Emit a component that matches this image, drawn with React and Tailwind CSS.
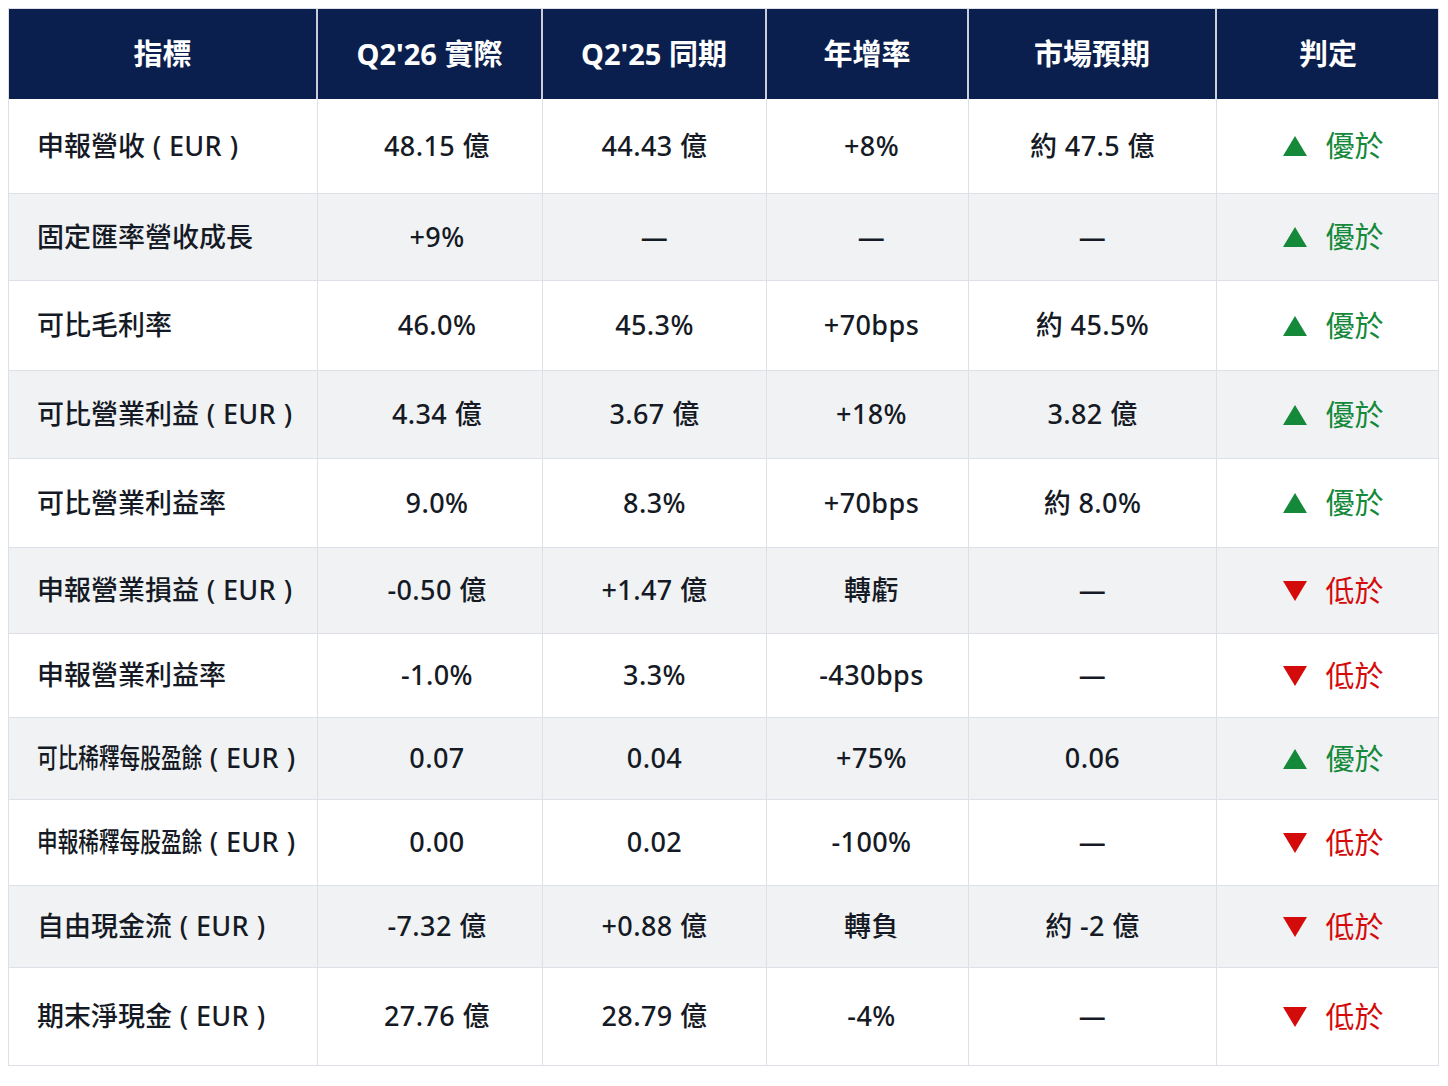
import React from "react";

const headers = ["指標", "Q2'26 實際", "Q2'25 同期", "年增率", "市場預期", "判定"];

const rows = [
  { h: "h-[95px]", name: "申報營收", eur: true, a: "48.15 億", b: "44.43 億", c: "+8%", d: "約 47.5 億", up: true },
  { h: "h-[87px]", name: "固定匯率營收成長", a: "+9%", b: "—", c: "—", d: "—", up: true },
  { h: "h-[90px]", name: "可比毛利率", a: "46.0%", b: "45.3%", c: "+70bps", d: "約 45.5%", up: true },
  { h: "h-[88px]", name: "可比營業利益", eur: true, a: "4.34 億", b: "3.67 億", c: "+18%", d: "3.82 億", up: true },
  { h: "h-[89px]", name: "可比營業利益率", a: "9.0%", b: "8.3%", c: "+70bps", d: "約 8.0%", up: true },
  { h: "h-[86px]", name: "申報營業損益", eur: true, a: "-0.50 億", b: "+1.47 億", c: "轉虧", d: "—", up: false },
  { h: "h-[84px]", name: "申報營業利益率", a: "-1.0%", b: "3.3%", c: "-430bps", d: "—", up: false },
  { h: "h-[82px]", name: "可比稀釋每股盈餘", eur: true, narrow: true, a: "0.07", b: "0.04", c: "+75%", d: "0.06", up: true },
  { h: "h-[86px]", name: "申報稀釋每股盈餘", eur: true, narrow: true, a: "0.00", b: "0.02", c: "-100%", d: "—", up: false },
  { h: "h-[82px]", name: "自由現金流", eur: true, a: "-7.32 億", b: "+0.88 億", c: "轉負", d: "約 -2 億", up: false },
  { h: "h-[97px]", name: "期末淨現金", eur: true, a: "27.76 億", b: "28.79 億", c: "-4%", d: "—", up: false, last: true },
];

const cols = "grid grid-cols-[309px_225px_224px_202px_248px_222px]";

function Verdict({ up }) {
  return (
    <div className="flex items-center justify-center gap-[17px] pl-[10px]">
      {up ? (
        <svg width="26" height="22" viewBox="0 0 26 22">
          <polygon points="13,1 25,21 1,21" fill="#14893a" />
        </svg>
      ) : (
        <svg width="26" height="22" viewBox="0 0 26 22">
          <polygon points="1,1 25,1 13,21" fill="#d40b0b" />
        </svg>
      )}
      <span className={up ? "text-[#14893a]" : "text-[#d40b0b]"}>{up ? "優於" : "低於"}</span>
    </div>
  );
}

function Eur() {
  return (
    <span className="whitespace-nowrap">
      <span className="inline-block w-[24px] text-center">(</span>
      <span className="tracking-[0.3px]">EUR</span>
      <span className="inline-block w-[24px] text-center">)</span>
    </span>
  );
}

function Name({ row }) {
  if (row.narrow) {
    return (
      <span className="flex items-center whitespace-nowrap">
        <span className="inline-block w-[165px] whitespace-nowrap">
          <span className="inline-block origin-left scale-x-[0.765]">{row.name}</span>
        </span>
        <Eur />
      </span>
    );
  }
  return (
    <span className="flex items-center whitespace-nowrap">
      <span>{row.name}</span>
      {row.eur ? <Eur /> : null}
    </span>
  );
}

export default function App() {
  return (
    <div
      className="min-h-[1086px] w-[1448px] bg-white pl-[8px] pt-[8px]"
      style={{ fontFamily: '"Noto Sans", "Noto Sans CJK TC", sans-serif' }}
    >
      <div className="w-[1431px] border border-[#dde1e7]">
        <div className={`${cols} h-[90px] bg-[#0b1f4e] text-[29px] font-bold text-white`}>
          {headers.map((t, i) => (
            <div
              key={i}
              className={`flex items-center justify-center ${i < 5 ? "border-r-2 border-[#c9ced8]" : ""}`}
            >
              {t}
            </div>
          ))}
        </div>
        {rows.map((r, idx) => (
          <div
            key={idx}
            className={`${cols} ${r.h} ${idx % 2 === 1 ? "bg-[#f1f2f4]" : "bg-white"} ${
              r.last ? "" : "border-b border-[#dde1e7]"
            } text-[27px] font-medium text-[#151a25]`}
          >
            <div className="flex items-center border-r border-[#dde1e7] pl-[28px]">
              <Name row={r} />
            </div>
            <div className="flex items-center justify-center border-r border-[#dde1e7] pl-[14px] tracking-[0.4px]">{r.a}</div>
            <div className="flex items-center justify-center border-r border-[#dde1e7] tracking-[0.4px]">{r.b}</div>
            <div className="flex items-center justify-center border-r border-[#dde1e7] pl-[8px] tracking-[0.4px]">{r.c}</div>
            <div className="flex items-center justify-center border-r border-[#dde1e7] tracking-[0.4px]">{r.d}</div>
            <div className="flex items-center justify-center font-normal text-[29px]">
              <Verdict up={r.up} />
            </div>
          </div>
        ))}
      </div>
    </div>
  );
}
